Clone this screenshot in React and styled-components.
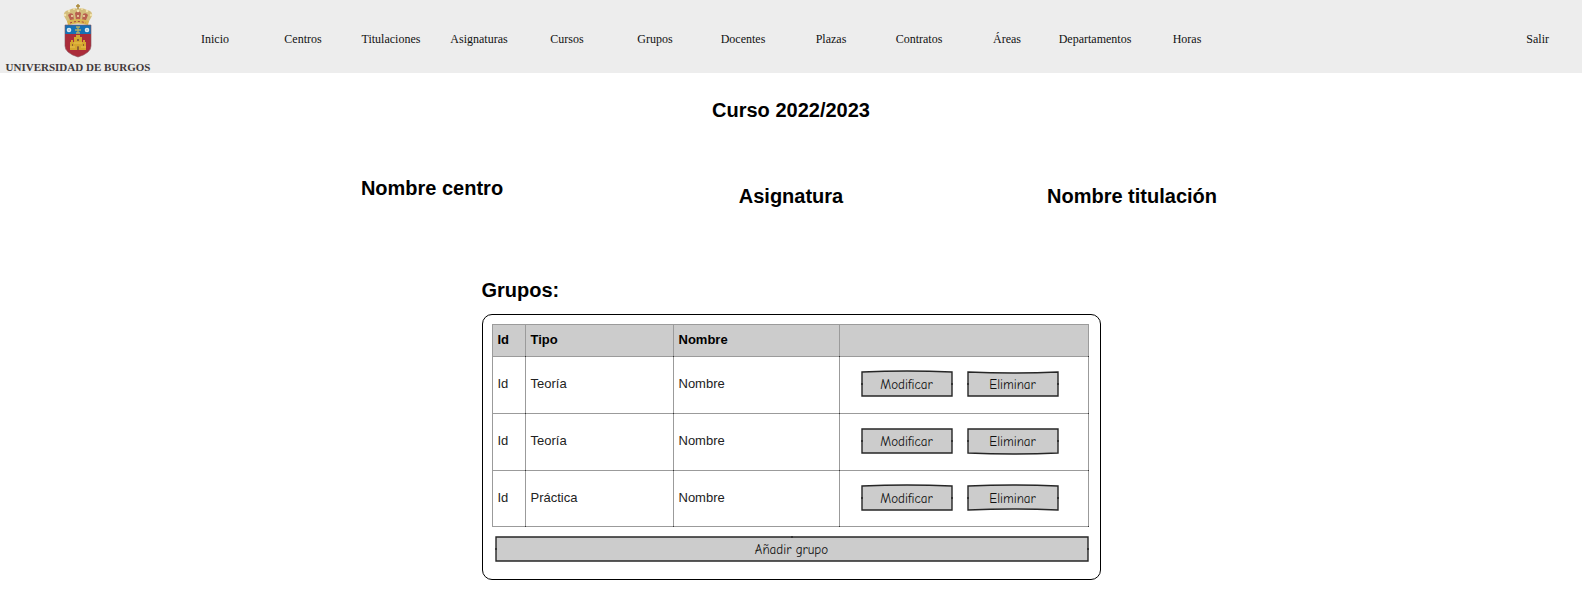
import React from "react";
import styled, { createGlobalStyle } from "styled-components";

const GlobalStyle = createGlobalStyle`
  *, *::before, *::after { box-sizing: border-box; }
  body {
    margin: 0;
    background: #fff;
    color: #000;
    font-family: "Liberation Sans", Arial, sans-serif;
  }
`;

const Header = styled.header`
  display: flex;
  height: 73px;
  background: #ededed;
  font-family: "Liberation Serif", "Times New Roman", serif;
`;

const Brand = styled.a`
  display: flex;
  flex: none;
  flex-direction: column;
  align-items: center;
  width: 156px;
  padding-top: 4px;
  color: #41393a;
  font-size: 11px;
  font-weight: 700;
  line-height: 12px;
  text-decoration: none;
  white-space: nowrap;
`;

const Crest = styled.svg`
  display: block;
  flex: none;
  width: 32px;
  height: 54px;
  margin-bottom: 3px;
`;

const Nav = styled.nav`
  display: flex;
  flex: 1;
  justify-content: space-between;
  padding: 31px 33px 0 15px;
`;

const NavList = styled.ul`
  display: flex;
  margin: 0;
  padding: 0;
  list-style: none;
`;

const NavItem = styled.li`
  width: ${(p) => (p.$wide ? 96 : 88)}px;
  text-align: center;
`;

const NavLink = styled.a`
  display: block;
  color: #111;
  font-size: 12px;
  line-height: 16px;
  text-decoration: none;
`;

const Main = styled.main`
  padding-top: 25px;
`;

const Title = styled.h1`
  margin: 0;
  font-size: 20px;
  line-height: 24px;
  text-align: center;
`;

const Context = styled.div`
  display: grid;
  grid-template-columns: 252fr 360fr 358fr 324fr 288fr;
  height: 32px;
  margin-top: 54px;
`;

const ContextName = styled.h2`
  grid-column: ${(p) => p.$column};
  align-self: ${(p) => (p.$raised ? "start" : "end")};
  margin: 0;
  font-size: 20px;
  line-height: 24px;
  text-align: center;
`;

const Groups = styled.section`
  width: 619px;
  max-width: 100%;
  margin: 70px auto 0;
`;

const GroupsTitle = styled.h2`
  margin: 0 0 12px;
  font-size: 20px;
  line-height: 24px;
`;

const Card = styled.div`
  padding: 9px 11px 17px 9px;
  border: 1px solid #000;
  border-radius: 10px;
`;

const Table = styled.table`
  width: 100%;
  table-layout: fixed;
  border-spacing: 0;
  border: solid #9b9b9b;
  border-width: 1px 0 0 1px;
  font-size: 13px;
  line-height: 16px;
  text-align: left;
`;

const Column = styled.col`
  width: ${(p) => (p.$width ? `${p.$width}px` : "auto")};
`;

const HeadCell = styled.th`
  position: relative;
  height: 32px;
  padding: 0 5px 2px;
  border: solid #9b9b9b;
  border-width: 0 1px 1px 0;
  background: #ccc;

  &::after {
    content: "";
    position: absolute;
    right: -1px;
    bottom: -1px;
    width: 1px;
    height: 1px;
    background: #333;
  }
`;

const Cell = styled.td`
  position: relative;
  height: 57px;
  padding: 0 5px 2px;
  border: solid #9b9b9b;
  border-width: 0 1px 1px 0;
  color: #222;

  tr:last-child > & { height: 56px; }

  &::after {
    content: "";
    position: absolute;
    right: -1px;
    bottom: -1px;
    width: 1px;
    height: 1px;
    background: #333;
  }
`;

const Actions = styled.div`
  display: flex;
  gap: 14px;
  padding-left: 16px;
`;

const SketchButton = styled.button`
  position: relative;
  display: block;
  width: ${(p) => (p.$full ? "auto" : "92px")};
  flex: ${(p) => (p.$full ? "1" : "none")};
  height: 26px;
  padding: 2px 0 0;
  border: 0;
  background: none;
  color: #111;
  font-family: "Comic Neue", "Comic Sans MS", Lato, sans-serif;
  font-size: 13px;
  line-height: 16px;
  cursor: pointer;
`;

const Outline = styled.svg`
  position: absolute;
  inset: 0;
  width: 100%;
  height: 100%;
  overflow: visible;
  fill: #ccc;
  stroke: #262626;
  stroke-width: 1.4;

  path { vector-effect: non-scaling-stroke; }
`;

const Label = styled.span`
  position: relative;
`;

const Footer = styled.div`
  display: flex;
  padding: 9px 0 0 3px;
`;

// top and bottom bow the hand-drawn edges, in pixels; positive bends down.
function Sketch({ children, top = 0, bottom = 0, full = false }) {
  const w = full ? 592 : 92;
  const mid = w / 2;
  return (
    <SketchButton type="button" $full={full}>
      <Outline viewBox={`0 0 ${w} 26`} preserveAspectRatio="none" aria-hidden="true">
        <path d={`M1 1 Q${mid} ${1 + top * 2} ${w - 1} 1 V25 Q${mid} ${25 + bottom * 2} 1 25 Z`} />
        <path d={`M0 13 H2 M${w - 2} 13 H${w}`} />
        {full && <path d={`M${mid} 0 V2`} />}
      </Outline>
      <Label>{children}</Label>
    </SketchButton>
  );
}

function UniversityCrest() {
  return (
    <Crest viewBox="0 0 32 54" aria-hidden="true">
      <path d="M6 19 L2 12 Q1 7 7 6 Q12 3 16 5 Q20 3 25 6 Q31 7 30 12 L26 19 Z" fill="#d3bd7c" />
      <path d="M8 16 L6 11 Q8 8 11 10 L12 16 Z M14 16 L13 9 Q16 5 19 9 L18 16 Z M20 16 L21 10 Q24 8 26 11 L24 16 Z" fill="#b8604f" />
      <path d="M5 17 Q16 13 27 17 L26 21 Q16 18 6 21 Z" fill="#d9b651" />
      <path d="M8 19 Q16 16 24 19" fill="none" stroke="#a63d3d" strokeWidth="1" strokeDasharray="2 2" />
      <path d="M16 0 V5 M14 2 H18" stroke="#a98735" strokeWidth="1.4" />
      <g fill="#f1e2ad">
        <circle cx="3" cy="11" r="1.3" /><circle cx="7" cy="7" r="1.2" />
        <circle cx="12" cy="5" r="1" /><circle cx="16" cy="7" r="1.3" />
        <circle cx="20" cy="5" r="1" /><circle cx="25" cy="7" r="1.2" />
        <circle cx="29" cy="11" r="1.3" /><circle cx="10" cy="12" r="1" />
        <circle cx="16" cy="12" r="1" /><circle cx="22" cy="12" r="1" />
      </g>
      <path d="M3 21 H29 V42 Q29 49 16 53 Q3 49 3 42 Z" fill="#ab2c3a" />
      <path d="M3 21 H29 V30 H3 Z" fill="#1671b5" />
      <path d="M3 21 H29 V42 Q29 49 16 53 Q3 49 3 42 Z" fill="none" stroke="#85535a" strokeWidth=".6" />
      <g fill="#dceaf2">
        <circle cx="7" cy="26" r="2.3" /><circle cx="25" cy="26" r="2.3" />
      </g>
      <circle cx="7" cy="26" r=".8" fill="#8eb6ce" /><circle cx="25" cy="26" r=".8" fill="#8eb6ce" />
      <path d="M16 23 V29 M13 26 H19 M14 23 H18 M14 29 H18" stroke="#b1ad65" strokeWidth="1.3" />
      <path d="M8 46 V38 H9 V36 H11 V38 H12 V33 H14 V31 H18 V33 H20 V38 H21 V36 H23 V38 H24 V46 Z" fill="#d5a62f" />
      <path d="M15 46 V43 Q16 41 17 43 V46 Z M10 40 H11 V42 H10 Z M21 40 H22 V42 H21 Z M15 35 H17 V37 H15 Z" fill="#8e6033" />
      <path d="M8 43 H13 M19 43 H24 M12 39 H20" stroke="#edcc59" strokeWidth=".8" />
    </Crest>
  );
}

const links = [
  "Inicio", "Centros", "Titulaciones", "Asignaturas", "Cursos", "Grupos",
  "Docentes", "Plazas", "Contratos", "Áreas", "Departamentos", "Horas",
];

const groups = [
  { type: "Teoría", edit: { top: -1 }, remove: { top: 1 } },
  { type: "Teoría", edit: {}, remove: { bottom: 1 } },
  { type: "Práctica", edit: { top: -1 }, remove: { top: -1, bottom: -1 } },
];

export default function App() {
  return (
    <>
      <GlobalStyle />
      <Header>
        <Brand href="#inicio">
          <UniversityCrest />
          UNIVERSIDAD DE BURGOS
        </Brand>
        <Nav>
          <NavList>
            {links.map((name) => (
              <NavItem key={name} $wide={name === "Horas"}>
                <NavLink href={`#${name.toLowerCase()}`}>{name}</NavLink>
              </NavItem>
            ))}
          </NavList>
          <NavLink href="#salir">Salir</NavLink>
        </Nav>
      </Header>
      <Main>
        <Title>Curso 2022/2023</Title>
        <Context>
          <ContextName $column={2} $raised>Nombre centro</ContextName>
          <ContextName $column={3}>Asignatura</ContextName>
          <ContextName $column={4}>Nombre titulación</ContextName>
        </Context>
        <Groups>
          <GroupsTitle>Grupos:</GroupsTitle>
          <Card>
            <Table>
              <colgroup>
                <Column $width={33} />
                <Column $width={148} />
                <Column $width={166} />
                <Column />
              </colgroup>
              <thead>
                <tr>
                  <HeadCell scope="col">Id</HeadCell>
                  <HeadCell scope="col">Tipo</HeadCell>
                  <HeadCell scope="col">Nombre</HeadCell>
                  <HeadCell as="td" />
                </tr>
              </thead>
              <tbody>
                {groups.map((group, index) => (
                  <tr key={index}>
                    <Cell>Id</Cell>
                    <Cell>{group.type}</Cell>
                    <Cell>Nombre</Cell>
                    <Cell>
                      <Actions>
                        <Sketch {...group.edit}>Modificar</Sketch>
                        <Sketch {...group.remove}>Eliminar</Sketch>
                      </Actions>
                    </Cell>
                  </tr>
                ))}
              </tbody>
            </Table>
            <Footer>
              <Sketch full>Añadir grupo</Sketch>
            </Footer>
          </Card>
        </Groups>
      </Main>
    </>
  );
}
